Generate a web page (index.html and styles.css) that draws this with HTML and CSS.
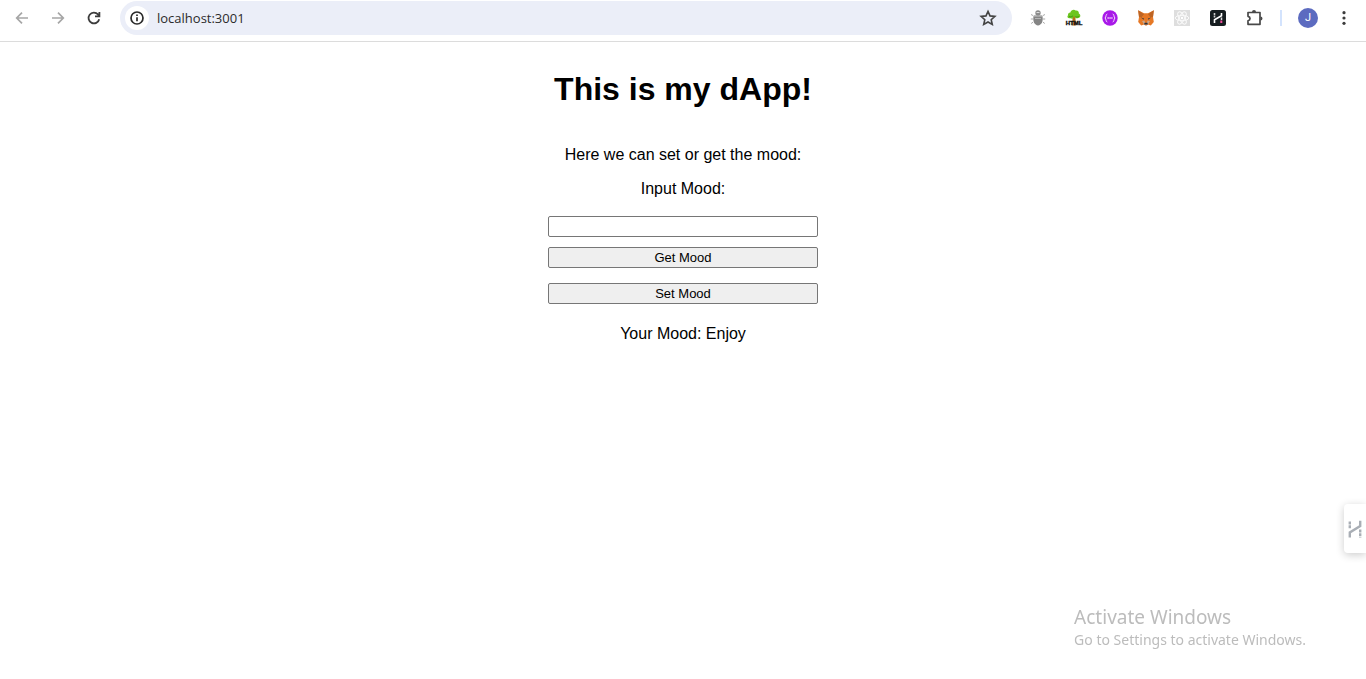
FILE: index.html
```html
<!DOCTYPE html>
<html lang="en">
<head>
<meta charset="utf-8">
<title>My dApp</title>
<link rel="stylesheet" href="styles.css">
</head>
<body>
<header class="toolbar">
  <nav class="group" aria-label="Navigation">
    <button class="tool" aria-label="Back" disabled><svg width="16" height="16" viewBox="0 0 16 16" fill="none" stroke="#a6a6a6" stroke-width="1.7"><path d="M14 8H3M8 2.6 2.7 8 8 13.4"/></svg></button>
    <button class="tool" aria-label="Forward" disabled><svg width="16" height="16" viewBox="0 0 16 16" fill="none" stroke="#a6a6a6" stroke-width="1.7"><path d="M2 8h11M8 2.6 13.3 8 8 13.4"/></svg></button>
    <button class="tool" aria-label="Reload"><svg width="16" height="16" viewBox="0 0 16 16" fill="none" stroke="#3c3c3c" stroke-width="1.8"><path d="M13.200 9.200A5.400 5.400 0 1 1 12 4.400l1 1.400M13.400 2v4.400H9"/></svg></button>
  </nav>
  <div class="omnibox">
    <button class="site" aria-label="View site information"><svg width="16" height="16" viewBox="0 0 16 16" fill="none" stroke="#2b2b2b" stroke-width="1.7"><circle cx="8" cy="8" r="6"/><path d="M8 7.2v4M8 4.5v1.6"/></svg></button>
    <input class="address" type="text" value="localhost:3001" aria-label="Address">
    <button class="star" aria-label="Bookmark this tab"><svg width="18" height="18" viewBox="0 0 18 18" fill="none" stroke="#444" stroke-width="1.6"><path d="m9 2.4 2 4.5 4.9.5-3.7 3.3 1.1 4.8L9 13l-4.300 2.500 1.100-4.800L2.100 7.400 7 6.900z"/></svg></button>
  </div>
  <div class="group">
    <button class="tool" aria-label="Bug extension"><svg width="16" height="16" viewBox="0 0 16 16"><path d="M3 5.500 1 4.500M3 9H.8M3 12.200 1.200 13.500M13 5.500l2-1M13 9h2.200M13 12.200l1.800 1.300" stroke="#aaa" fill="none"/><circle cx="8" cy="3" r="2.700" fill="#8c8c8c"/><path d="M6.500 2.500h3" stroke="#ddd"/><path d="M3.600 5.600h8.800c1.200 6-1 9.800-4.400 9.800S2.400 11.600 3.600 5.600z" fill="#858585"/><path d="M4 6.200h8M5 8.500h6" stroke="#b5b5b5"/></svg></button>
    <button class="tool" aria-label="HTML tree extension"><svg width="18" height="18" viewBox="0 0 18 18"><path d="M7.600 7h2.800l.4 9.500H7.200z" fill="#b8701c"/><path d="M5.500 9.200C2.800 10 1.600 7.600 3 6.200 2.700 4.400 4.300 3.300 5.400 3.500 6 .8 9.300.2 10.600 1.600c2.200-.5 3.700 1.300 3.200 2.800 2.200 1 2 4.200-.4 4.500-1.500.8-3 .2-3.700-.7C8.700 9.800 6.700 10 5.500 9.200z" fill="#6cc51f"/><path d="M4 7.500c2 1 3-.5 4-.5M10.500 7.500c1.500 1 3 .5 3.500-.5" stroke="#3f9c12" fill="none"/><path d="M8.300 7.500h1.400l.2 4.500H8z" fill="#b8701c"/><text class="badge" x="9" y="16" text-anchor="middle">HTML</text></svg></button>
    <button class="tool" aria-label="Code extension"><svg width="16" height="16" viewBox="0 0 16 16"><circle cx="8" cy="8" r="7.700" fill="#a819e8"/><path d="M5.300 4C3.500 4.200 4.500 7 3 8c1.500 1 .5 3.800 2.300 4M10.700 4c1.800.2.800 3 2.300 4-1.500 1-.5 3.800-2.300 4" fill="none" stroke="#f7dcff"/><path d="M5.500 8h5" stroke="#f7dcff" stroke-width="1.500" stroke-dasharray="1.300 .6"/></svg></button>
    <button class="tool" aria-label="Fox wallet extension"><svg width="18" height="18" viewBox="0 0 18 18"><path d="m1.200 1.300 5.800 3h4l5.800-3-.8 6.700.8 5-3 3.500-3-.9-1 .9H8.200l-1-.9-3 .9-3-3.500.8-5z" fill="#e67825"/><path d="m1.200 1.300 5.800 4-2.500 3L2 8zM16.800 1.300l-5.800 4 2.500 3L16 8z" fill="#bd6424"/><path d="m3.800 8.500 3.300 1-.3 1.300zM14.200 8.500l-3.300 1 .3 1.300z" fill="#433d3c"/><path d="m5 12 2.500-.5.700 2.500h1.600l.7-2.500 2.500.5-2 3.500H7z" fill="#c9a68d"/><path d="M7.500 13.700h3l.3 1.800H7.200z" fill="#2e3036"/></svg></button>
    <button class="tool" aria-label="React extension"><svg width="16" height="16" viewBox="0 0 16 16"><path d="M0 0h16v16H0z" fill="#dedede"/><g fill="none" stroke="#fafafa"><ellipse cx="8" cy="8" rx="6.800" ry="2.700"/><ellipse cx="8" cy="8" rx="6.800" ry="2.700" transform="rotate(60 8 8)"/><ellipse cx="8" cy="8" rx="6.800" ry="2.700" transform="rotate(120 8 8)"/></g><circle cx="8" cy="8" r="1.200" fill="#fff"/></svg></button>
    <button class="tool" aria-label="H extension"><svg width="16" height="16" viewBox="0 0 16 16"><rect width="16" height="16" rx="2.500" fill="#161d20"/><path d="M4.500 13v-3.200l7-4V3" fill="none" stroke="#fff" stroke-width="1.600"/><path d="M4.500 3v5" stroke="#ccc" stroke-width="1.600" stroke-dasharray="2 .6"/><path d="M11.500 7.500v2.500" stroke="#ddd" stroke-width="1.500"/><path d="M11.300 10.500V13" stroke="#ef4d9b" stroke-width="2"/></svg></button>
    <button class="tool" aria-label="Extensions"><svg width="18" height="18" viewBox="0 0 18 18"><path d="M3 3.500h12v11.800H3v-3.500c2.700-.7 2.700-3.900 0-4.500z" fill="none" stroke="#484848" stroke-width="1.700" stroke-linejoin="round"/><path d="M7 3a2 2 0 0 1 4 0zM15.500 7.400a2 2 0 0 1 0 4z" fill="#484848"/></svg></button>
  </div>
  <span class="divider"></span>
  <div class="group">
    <button class="tool" aria-label="Profile"><span class="avatar">J</span></button>
    <button class="tool" aria-label="Menu"><svg width="16" height="16" viewBox="0 0 16 16" fill="#3c3c3c"><circle cx="8" cy="2.700" r="1.600"/><circle cx="8" cy="8" r="1.600"/><circle cx="8" cy="13.300" r="1.600"/></svg></button>
  </div>
</header>
<main class="page">
  <h1 class="title">This is my dApp!</h1>
  <p class="line">Here we can set or get the mood:</p>
  <label class="line" for="mood">Input Mood:</label>
  <form class="form">
    <input class="field" type="text" id="mood">
    <button class="action" type="button">Get Mood</button>
    <button class="action last" type="button">Set Mood</button>
  </form>
  <p class="line result">Your Mood: Enjoy</p>
</main>
<button class="side" aria-label="Open side panel"><svg width="14" height="18" viewBox="0 0 14 18"><path d="M1.800 17.500v-5l10.400-6.500V.8" fill="none" stroke="#a9aeb5" stroke-width="2.400"/><path d="M1.800 1.500v7M12.200 9.500v8" fill="none" stroke="#a9aeb5" stroke-width="2.400" stroke-dasharray="3 .8"/></svg></button>
<aside class="watermark">
  <div class="mark-title">Activate Windows</div>
  <div class="mark-text">Go to Settings to activate Windows.</div>
</aside>
</body>
</html>
```
FILE: styles.css
```css
* { box-sizing: border-box; }
body {
  margin: 0;
  background: #fff;
  color: #000;
  font-family: "Liberation Sans", Arial, sans-serif;
  font-size: 16px;
}
.toolbar {
  display: flex;
  gap: 8px;
  padding: 1px 4px 6px;
  border-bottom: 1px solid #dcdcdc;
}
.group { display: flex; }
.tool, .site, .star, .side {
  display: flex;
  align-items: center;
  justify-content: center;
  padding: 0;
  border: 0;
  background: none;
}
.tool { width: 36px; height: 34px; }
.omnibox {
  flex: 1;
  display: flex;
  align-items: center;
  gap: 8px;
  height: 34px;
  padding: 0 12px 0 5px;
  border-radius: 17px;
  background: #ebeef8;
}
.site {
  width: 24px;
  height: 24px;
  border-radius: 50%;
  background: #fff;
}
.address {
  flex: 1;
  padding: 0;
  border: 0;
  background: none;
  color: #2b2b2b;
  font: 13px "Open Sans", sans-serif;
}
.star { width: 24px; height: 24px; }
.badge {
  fill: #111;
  stroke: #111;
  stroke-width: 0.4;
  font: bold 6px "Liberation Sans", Arial, sans-serif;
}
.divider {
  align-self: center;
  width: 2px;
  height: 16px;
  background: #d3e3fd;
}
.avatar {
  width: 20px;
  border-radius: 50%;
  background: #5c6bc0;
  color: #fff;
  font: 11px/20px Roboto, sans-serif;
}
.page {
  display: flex;
  flex-direction: column;
  align-items: center;
  padding-top: 28px;
}
.title {
  margin: 0 0 38px;
  font-size: 32px;
  line-height: 38px;
}
.line {
  margin: 0 0 16px;
  line-height: 18px;
}
.form {
  display: flex;
  flex-direction: column;
  width: 270px;
  padding-top: 2px;
}
.field, .action {
  height: 21px;
  padding: 0 6px;
  border: 1px solid #767676;
  border-radius: 2px;
  font: 13px "Liberation Sans", Arial, sans-serif;
}
.field { margin-bottom: 10px; }
.action {
  background: #efefef;
  color: #000;
}
.last { margin-top: 15px; }
.result { margin-top: 21px; }
.side {
  position: fixed;
  right: 0;
  bottom: 126px;
  width: 22px;
  height: 49px;
  border-radius: 4px 0 0 4px;
  background: #fff;
  box-shadow: 0 2px 8px rgba(0, 0, 0, 0.2);
}
.watermark {
  position: fixed;
  right: 60px;
  bottom: 29px;
  color: #bcbcbc;
  font-family: "Noto Sans", sans-serif;
}
.mark-title { font-size: 19px; line-height: 25px; }
.mark-text { font-size: 14px; line-height: 20px; }
```
